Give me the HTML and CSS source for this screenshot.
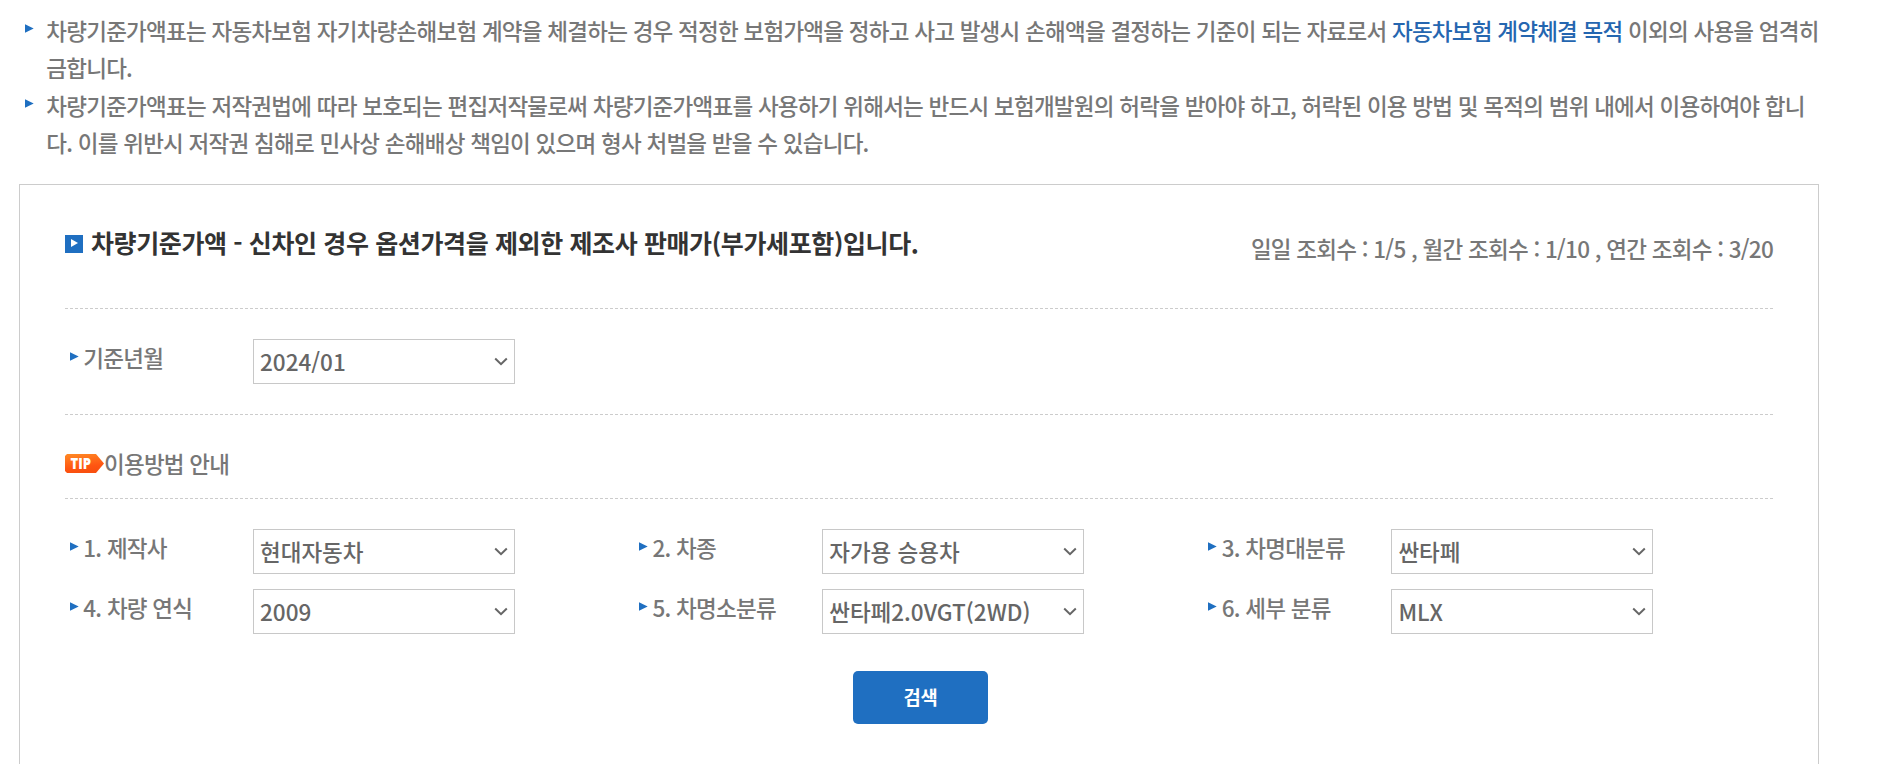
FILE: index.html
```html
<!DOCTYPE html>
<html lang="ko">
<head>
<meta charset="utf-8">
<title>차량기준가액</title>
<link rel="stylesheet" href="styles.css">
</head>
<body>
<svg width="0" height="0" class="defs">
  <symbol id="tri" viewBox="0 0 9 9"><path d="M0 .3 8.7 4.5 0 8.7z" fill="#1f6fc1"/></symbol>
  <symbol id="chev" viewBox="0 0 14 9"><path d="M1.2 1.5 7 7.2 12.8 1.5" fill="none" stroke="#666" stroke-width="2"/></symbol>
</svg>
<ul class="notes">
  <li><svg class="tri"><use href="#tri"/></svg><p>차량기준가액표는 자동차보험 자기차량손해보험 계약을 체결하는 경우 적정한 보험가액을 정하고 사고 발생시 손해액을 결정하는 기준이 되는 자료로서 <span class="point">자동차보험 계약체결 목적</span> 이외의 사용을 엄격히<br>금합니다.</p></li>
  <li><svg class="tri"><use href="#tri"/></svg><p>차량기준가액표는 저작권법에 따라 보호되는 편집저작물로써 차량기준가액표를 사용하기 위해서는 반드시 보험개발원의 허락을 받아야 하고, 허락된 이용 방법 및 목적의 범위 내에서 이용하여야 합니<br>다. 이를 위반시 저작권 침해로 민사상 손해배상 책임이 있으며 형사 처벌을 받을 수 있습니다.</p></li>
</ul>
<main class="panel">
  <header class="head">
    <svg class="square" viewBox="0 0 18 18"><path d="M0 0h18v18H0z" fill="#1f6fc1"/><path d="M6 4 13 8 6 12z" fill="#fff"/></svg>
    <h1>차량기준가액 - 신차인 경우 옵션가격을 제외한 제조사 판매가(부가세포함)입니다.</h1>
    <p class="count">일일 조회수 : 1/5 , 월간 조회수 : 1/10 , 연간 조회수 : 3/20</p>
  </header>
  <section class="grid month">
    <div class="field"><span class="label"><svg class="tri"><use href="#tri"/></svg>기준년월</span><div class="select">2024/01<svg class="chev"><use href="#chev"/></svg></div></div>
  </section>
  <section class="tip">
    <svg class="badge" viewBox="0 0 39 19"><defs><linearGradient id="g" x1="0" y1="0" x2=".25" y2="1"><stop offset="0" stop-color="#ff8a25"/><stop offset=".75" stop-color="#ff5511"/><stop offset="1" stop-color="#f9500f"/></linearGradient></defs><path d="M2 0H31L39 9.5 31 19H2L0 17V2z" fill="url(#g)"/><text x="5.5" y="14.8" class="badge-text" textLength="20.5" lengthAdjust="spacingAndGlyphs">TIP</text></svg>
    <span>이용방법 안내</span>
  </section>
  <section class="grid">
    <div class="field"><span class="label low"><svg class="tri"><use href="#tri"/></svg>1. 제작사</span><div class="select">현대자동차<svg class="chev"><use href="#chev"/></svg></div></div>
    <div class="field"><span class="label low"><svg class="tri"><use href="#tri"/></svg>2. 차종</span><div class="select">자가용 승용차<svg class="chev"><use href="#chev"/></svg></div></div>
    <div class="field"><span class="label low"><svg class="tri"><use href="#tri"/></svg>3. 차명대분류</span><div class="select">싼타페<svg class="chev"><use href="#chev"/></svg></div></div>
    <div class="field"><span class="label low"><svg class="tri"><use href="#tri"/></svg>4. 차량 연식</span><div class="select">2009<svg class="chev"><use href="#chev"/></svg></div></div>
    <div class="field"><span class="label low"><svg class="tri"><use href="#tri"/></svg>5. 차명소분류</span><div class="select">싼타페2.0VGT(2WD)<svg class="chev"><use href="#chev"/></svg></div></div>
    <div class="field"><span class="label low"><svg class="tri"><use href="#tri"/></svg>6. 세부 분류</span><div class="select">MLX<svg class="chev"><use href="#chev"/></svg></div></div>
  </section>
  <button class="search">검색</button>
</main>
</body>
</html>
```
FILE: styles.css
```css
* { box-sizing: border-box; margin: 0; padding: 0; }
body {
  height: 764px;
  background: #fff;
  color: #777;
  font: 500 22.5px/37.5px "Noto Sans CJK KR", sans-serif;
  letter-spacing: -0.75px;
}
.defs { position: absolute; }
.notes { list-style: none; padding: 11.5px 0 0 25px; height: 184px; }
.notes li { display: flex; white-space: nowrap; }
.tri { flex: none; width: 9px; height: 9px; }
.notes .tri { margin: 12.5px 12.3px 0 0; }
.point { color: #2566b0; }
.panel {
  display: flex;
  flex-direction: column;
  width: 1800px;
  height: 580px;
  margin-left: 19px;
  padding: 0 45px;
  border: 1px solid #ccc;
  border-bottom: 0;
}
.head {
  display: flex;
  height: 124px;
  border-bottom: 1px dashed #ccc;
}
.square { width: 18px; height: 18px; margin: 50px 8px 0 0; }
h1 { margin-top: 39px; color: #333; font-size: 25px; font-weight: 700; letter-spacing: -0.38px; white-space: nowrap; }
.count { margin: 45px 0 0 auto; white-space: nowrap; }
.grid {
  display: grid;
  grid-template-columns: repeat(3, 569.2px);
  row-gap: 15px;
  padding-top: 30px;
}
.month { height: 106px; border-bottom: 1px dashed #ccc; }
.field { display: flex; height: 45px; }
.label { display: flex; width: 188px; padding-left: 5px; white-space: nowrap; }
.label .tri { margin: 13px 4.3px 0 0; }
.label.low .tri { margin-top: 12.5px; }
.select {
  display: flex;
  align-items: center;
  justify-content: space-between;
  width: 262px;
  height: 45px;
  padding: 1px 6px 0;
  border: 1px solid #c8c8c8;
  color: #666;
  letter-spacing: 0;
  white-space: nowrap;
}
.chev { width: 14px; height: 9px; margin-top: -2px; }
.tip {
  display: flex;
  height: 84px;
  padding-top: 30px;
  border-bottom: 1px dashed #ccc;
}
.badge { width: 39px; height: 19px; margin: 9px 0 0; }
.badge-text { font: 800 15px "Open Sans", sans-serif; fill: #fff; letter-spacing: 0; }
.search {
  align-self: center;
  width: 135px;
  height: 53px;
  margin: 37px 0 0 3px;
  padding-bottom: 2px;
  border: 0;
  border-radius: 5px;
  background: #1f6fc1;
  color: #fff;
  font: 700 18.75px "Noto Sans CJK KR", sans-serif;
  letter-spacing: -0.3px;
}
```
